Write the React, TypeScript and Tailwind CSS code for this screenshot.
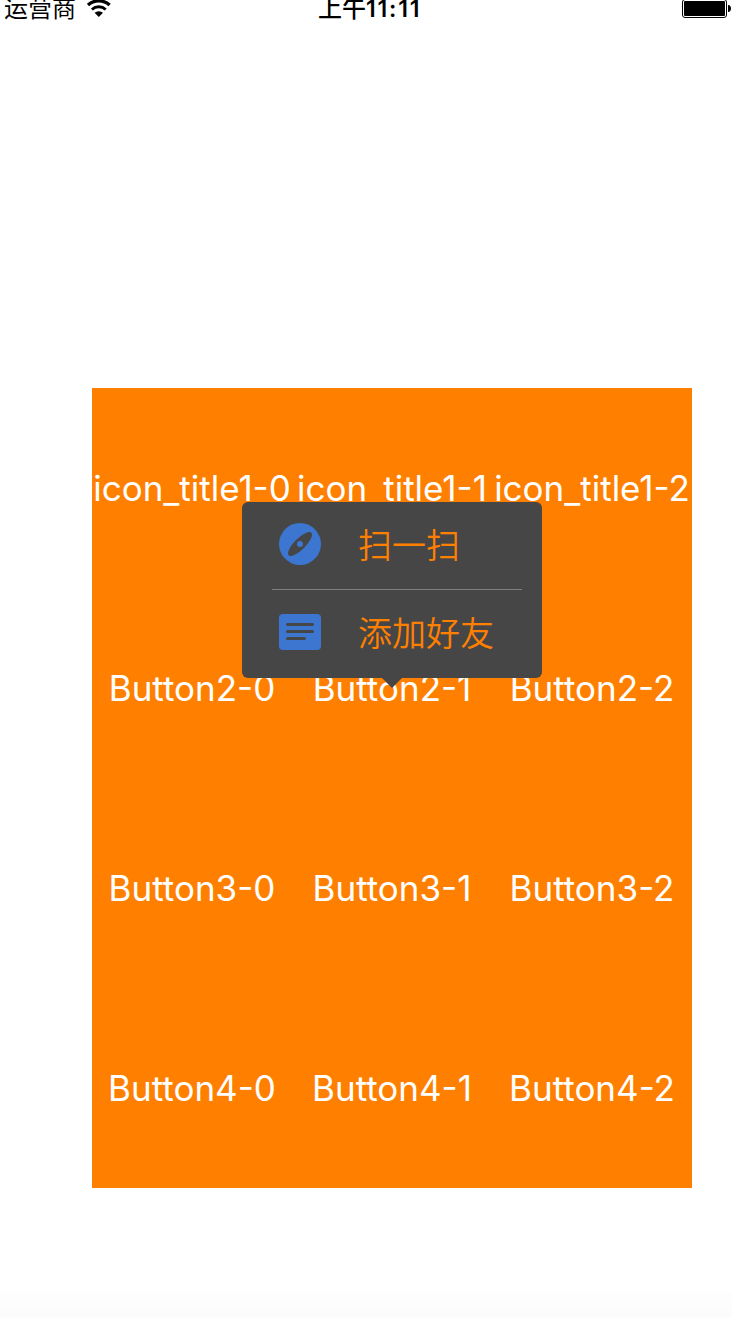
const rows = [
  ['icon_title1-0', 'icon_title1-1', 'icon_title1-2'],
  ['Button2-0', 'Button2-1', 'Button2-2'],
  ['Button3-0', 'Button3-1', 'Button3-2'],
  ['Button4-0', 'Button4-1', 'Button4-2'],
];

function WifiIcon() {
  return (
    <svg className="ml-[10px] block" width="26" height="18" viewBox="0 0 26 18" fill="none" stroke="#000">
      <path d="M2 5.100a16 16 0 0 1 21.600 0" strokeWidth="3.400" />
      <path d="M5.900 9.500a10.300 10.300 0 0 1 13.800 0" strokeWidth="3" />
      <path d="M12.800 17l-4.200-4.200a6.200 6.200 0 0 1 8.400 0z" fill="#000" stroke="none" />
    </svg>
  );
}

function BatteryIcon() {
  return (
    <svg className="block" width="50" height="19" viewBox="0 0 50 19">
      <rect x="0.5" y="-0.5" width="44" height="18" rx="2.5" fill="#fff" stroke="#000" />
      <rect x="2" y="1" width="41" height="15" rx="1" fill="#000" />
      <path d="M46 5c2 0 3 1.6 3 3.500s-1 3.500-3 3.500z" fill="#000" />
    </svg>
  );
}

function CompassIcon() {
  return (
    <svg className="block" width="42" height="42" viewBox="0 0 42 42">
      <circle cx="21" cy="21" r="21" fill="#3c76d0" />
      <ellipse cx="21" cy="21" rx="16" ry="5.600" transform="rotate(-45 21 21)" fill="#464646" />
      <circle cx="21" cy="21" r="3" fill="#3c76d0" />
    </svg>
  );
}

function NoteIcon() {
  return (
    <svg className="block" width="42" height="36" viewBox="0 0 42 36">
      <rect width="42" height="36" rx="4" fill="#3c76d0" />
      <path d="M8.500 10.500h25M8.500 17.500h25M8.500 24.500h17" stroke="#464646" strokeWidth="3" strokeLinecap="round" />
    </svg>
  );
}

function Label({ text }: { text: string }) {
  const [head, tail] = text.split('_');
  if (tail === undefined) return <span>{text}</span>;
  return (
    <span>
      {head}
      <span className="align-[-1.5px] leading-none">_</span>
      {tail}
    </span>
  );
}

export default function App() {
  return (
    <div className="h-[1318px] w-[732px] overflow-hidden bg-white font-['Inter','Noto_Sans_CJK_SC',sans-serif] text-black">
      <header className="flex h-[388px] items-start justify-between">
        <div className="flex w-[318px] pl-[4px]">
          <span className="-mt-[3px] text-[24px] leading-[24px]">运营商</span>
          <WifiIcon />
        </div>
        <span className="-mt-[5px] text-[23px] font-semibold leading-[24px] tracking-[1.8px] whitespace-nowrap">
          <span className="font-['Noto_Sans_CJK_SC',sans-serif] text-[24px] font-medium tracking-normal">上午</span>11:11
        </span>
        <div className="ml-auto">
          <BatteryIcon />
        </div>
      </header>
      <main className="relative ml-[92px] grid h-[800px] w-[600px] grid-cols-3 grid-rows-4 bg-[#ff8000] text-white">
        {rows.flat().map((label) => (
          <div key={label} className="flex items-center justify-center text-[35px] leading-[44px] whitespace-nowrap">
            <Label text={label} />
          </div>
        ))}
        <div className="absolute top-[114px] left-[150px] flex h-[176px] w-[300px] flex-col rounded-[6px] bg-[#464646] pr-[20px] pl-[30px] font-['Noto_Sans_CJK_SC',sans-serif] text-[34px] leading-[40px] font-[350] text-[#ff8000]">
          <div className="flex h-[88px] items-center border-b border-[#808080] pb-[3px] pl-[7px]">
            <CompassIcon />
            <span className="ml-[37px]">扫一扫</span>
          </div>
          <div className="flex h-[88px] items-center pb-[4px] pl-[7px]">
            <NoteIcon />
            <span className="ml-[37px]">添加好友</span>
          </div>
          <svg className="absolute top-full left-[140px] block" width="20" height="10" viewBox="0 0 20 10">
            <path d="M0 0h20L10 10z" fill="#464646" />
          </svg>
        </div>
      </main>
      <div className="mt-[104px] h-[16px] bg-[#fdfdfd]" />
      <div className="h-[10px] bg-[#fcfcfc]" />
    </div>
  );
}
